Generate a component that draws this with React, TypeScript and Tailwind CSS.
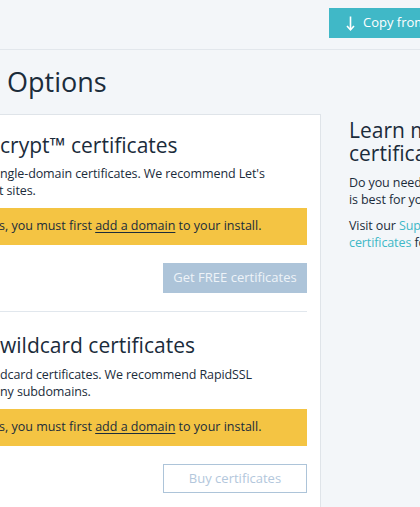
import React from "react";

export default function App() {
  return (
    <div
      className="w-[420px] h-[507px] overflow-hidden bg-[#f3f6f9] text-[#1b2c3b]"
      style={{ fontFamily: '"Open Sans", "Liberation Sans", sans-serif' }}
    >
      {/* header */}
      <div className="h-[50px] border-b border-[#e2e7ec] flex justify-end">
        <button className="mt-[8px] h-[30px] w-[91px] bg-[#40b8c7] text-white flex items-center pl-[17px] gap-[8px] text-[13px] whitespace-nowrap overflow-hidden shrink-0">
          <svg width="9" height="15" viewBox="0 0 9 15" fill="none" stroke="white" strokeWidth="1.6" className="shrink-0">
            <line x1="4.5" y1="0.5" x2="4.5" y2="13.5" />
            <polyline points="1,10 4.5,13.8 8,10" />
          </svg>
          <span>Copy from production</span>
        </button>
      </div>

      <h1 className="mt-[14px] ml-[7px] text-[27px] leading-[36px] font-normal whitespace-nowrap">Options</h1>

      <div className="mt-[14px] flex items-start">
        {/* card */}
        <div className="w-[321px] shrink-0 bg-white border-t border-r border-[#dfe4e9] pr-[13px] pt-[16px] h-[400px] flex flex-col">
          <h2 className="text-[21px] leading-[28px] whitespace-nowrap">crypt™ certificates</h2>
          <p className="mt-[6px] text-[12.5px] tracking-[-0.1px] leading-[17px] whitespace-nowrap">
            ngle-domain certificates. We recommend Let's
            <br />
            <span className="-ml-[1px]">t sites.</span>
          </p>
          <div className="mt-[9px] h-[37px] bg-[#f4c443] pt-[9px] text-[12.5px] leading-[17px] whitespace-nowrap">
            <span className="-ml-[1px]">s, you must first </span>
            <a className="underline underline-offset-2">add a domain</a> to your install.
          </div>
          <button className="mt-[18px] self-end h-[30px] w-[144px] bg-[#adc4d9] text-[#eef3f8] text-[13px]">
            Get FREE certificates
          </button>
          <div className="mt-[18px] h-px bg-[#e1e7ed]" />
          <h2 className="mt-[19px] text-[21px] leading-[28px] whitespace-nowrap">wildcard certificates</h2>
          <p className="mt-[7px] text-[12.5px] tracking-[-0.1px] leading-[17px] whitespace-nowrap">
            dcard certificates. We recommend RapidSSL
            <br />
            ny subdomains.
          </p>
          <div className="mt-[9px] h-[37px] bg-[#f4c443] pt-[9px] text-[12.5px] leading-[17px] whitespace-nowrap">
            <span className="-ml-[1px]">s, you must first </span>
            <a className="underline underline-offset-2">add a domain</a> to your install.
          </div>
          <button className="mt-[18px] self-end h-[29px] w-[144px] border border-[#adc4d9] text-[#b3c7dc] text-[13px] bg-white">
            Buy certificates
          </button>
        </div>

        {/* right column */}
        <div className="pl-[28px] pt-[5px] whitespace-nowrap">
          <h2 className="text-[21px] leading-[23px]">
            Learn more about SSL
            <br />
            certificates
          </h2>
          <p className="mt-[9px] text-[12.5px] tracking-[-0.1px] leading-[17px]">
            Do you need an SSL certificate? Find out which
            <br />
            is best for your site.
          </p>
          <p className="mt-[9px] text-[12.5px] tracking-[-0.1px] leading-[17px]">
            Visit our <a className="text-[#40b8c7]">Support Center article</a>
            <br />
            <a className="text-[#40b8c7]">certificates</a> for more info.
          </p>
        </div>
      </div>
    </div>
  );
}
